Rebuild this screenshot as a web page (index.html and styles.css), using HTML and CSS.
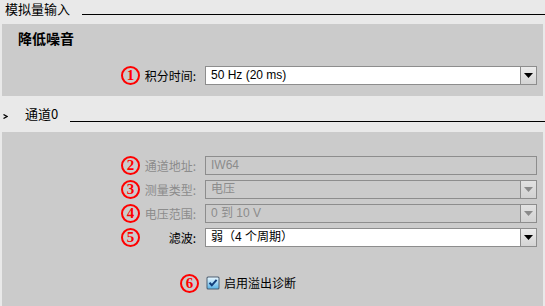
FILE: index.html
```html
<!DOCTYPE html>
<html lang="zh">
<head>
<meta charset="utf-8">
<link rel="stylesheet" href="styles.css">
</head>
<body>
<div class="page">
  <div class="sec-head top">
    <span class="title">模拟量输入</span>
    <span class="rule"></span>
  </div>
  <div class="panel p1">
    <div class="subtitle">降低噪音</div>
    <div class="row">
      <span class="num">1</span>
      <span class="label">积分时间:</span>
      <div class="select">
        <span class="val">50 Hz (20 ms)</span>
        <span class="btn"><svg width="9" height="5" viewBox="0 0 9 5"><path d="M0 0H9L4.5 5Z" fill="#000"/></svg></span>
      </div>
    </div>
  </div>
  <div class="sec-head ch">
    <svg class="chev" width="5" height="5" viewBox="0 0 5 5"><path d="M0.5 0.5L4 2.5L0.5 4.5" fill="none" stroke="#000" stroke-width="1.3"/></svg>
    <span class="title">通道0</span>
    <span class="rule"></span>
  </div>
  <div class="panel p2">
    <div class="rows">
      <div class="row dis">
        <span class="num">2</span>
        <span class="label">通道地址:</span>
        <div class="select plain"><span class="val">IW64</span></div>
      </div>
      <div class="row dis">
        <span class="num">3</span>
        <span class="label">测量类型:</span>
        <div class="select"><span class="val">电压</span><span class="btn"><svg width="9" height="5" viewBox="0 0 9 5"><path d="M0 0H9L4.5 5Z" fill="#8a8a8a"/></svg></span></div>
      </div>
      <div class="row dis">
        <span class="num">4</span>
        <span class="label">电压范围:</span>
        <div class="select"><span class="val">0 到 10 V</span><span class="btn"><svg width="9" height="5" viewBox="0 0 9 5"><path d="M0 0H9L4.5 5Z" fill="#8a8a8a"/></svg></span></div>
      </div>
      <div class="row">
        <span class="num">5</span>
        <span class="label">滤波:</span>
        <div class="select"><span class="val">弱（4 个周期）</span><span class="btn"><svg width="9" height="5" viewBox="0 0 9 5"><path d="M0 0H9L4.5 5Z" fill="#000"/></svg></span></div>
      </div>
    </div>
    <div class="check-row">
      <span class="num">6</span>
      <svg class="cb" width="14" height="14" viewBox="0 0 14 14">
        <defs>
          <linearGradient id="g" x1="0" y1="0" x2="0" y2="1">
            <stop offset="0" stop-color="#e6f6ff"/>
            <stop offset="1" stop-color="#5bb4e6"/>
          </linearGradient>
        </defs>
        <rect x="0.5" y="0.5" width="13" height="13" rx="1.5" fill="#4d5f72"/>
        <rect x="1.5" y="1.5" width="11" height="11" rx="1" fill="url(#g)"/>
        <path d="M3.5 6.8L5.8 9.3L10.6 3.8" fill="none" stroke="#123d7a" stroke-width="2"/>
      </svg>
      <span class="cb-label">启用溢出诊断</span>
    </div>
  </div>
</div>
</body>
</html>
```

FILE: styles.css
```css
html, body {
  margin: 0;
  padding: 0;
  background: #e9e9e9;
}
.page {
  width: 545px;
  height: 306px;
  overflow: hidden;
  font-family: "Noto Sans CJK SC", "Liberation Sans", sans-serif;
  font-size: 12px;
  color: #000;
}
.sec-head {
  display: flex;
  align-items: flex-start;
  background: #e9e9e9;
}
.sec-head.top {
  height: 24px;
  padding-left: 5px;
}
.sec-head.top .title {
  font-size: 13px;
  line-height: 17px;
}
.sec-head.top .rule {
  flex: 1;
  margin-left: 12px;
  margin-top: 14px;
  border-top: 1px solid #000;
}
.sec-head.ch {
  height: 36px;
  padding-left: 3px;
}
.chev {
  margin-top: 18px;
}
.sec-head.ch .title {
  font-size: 13px;
  line-height: 17px;
  margin-left: 17px;
  margin-top: 9px;
}
.sec-head.ch .rule {
  flex: 1;
  margin-left: 12px;
  margin-top: 25px;
  border-top: 1px solid #000;
}
.panel {
  margin: 0 2px;
  background: #cbcbcb;
  box-sizing: border-box;
}
.p1 {
  height: 72px;
  padding-top: 5px;
}
.subtitle {
  padding-left: 16px;
  font-size: 14px;
  font-weight: bold;
  line-height: 18px;
}
.p1 .row {
  margin-top: 19px;
}
.p2 {
  height: 174px;
  padding-top: 24px;
}
.rows {
  display: flex;
  flex-direction: column;
  gap: 5px;
}
.row {
  display: flex;
  align-items: center;
  height: 19px;
  padding-left: 119px;
}
.num {
  width: 19px;
  height: 19px;
  box-sizing: border-box;
  border: 2px solid #f00;
  border-radius: 50%;
  color: #f00;
  font-family: "Liberation Serif", serif;
  font-weight: bold;
  font-size: 15px;
  line-height: 15px;
  text-align: center;
  flex: none;
}
.label {
  width: 56px;
  text-align: right;
  line-height: 19px;
  flex: none;
}
.select {
  margin-left: 9px;
  width: 332px;
  height: 19px;
  box-sizing: border-box;
  border: 1px solid #8d8d8d;
  background: #fff;
  display: flex;
  align-items: stretch;
}
.val {
  flex: 1;
  padding-left: 5px;
  line-height: 17px;
  font-family: "Liberation Sans", "Noto Sans CJK SC", sans-serif;
  font-size: 12px;
}
.btn {
  width: 15px;
  border-left: 1px solid #8d8d8d;
  background: linear-gradient(#ececec, #d4d4d4);
  display: flex;
  align-items: center;
  justify-content: center;
}
.dis .label,
.dis .val {
  color: #8c8c8c;
}
.dis .select {
  background: #cbcbcb;
}
.dis .btn {
  background: linear-gradient(#e2e2e2, #d2d2d2);
}
.check-row {
  display: flex;
  align-items: center;
  margin-top: 26px;
  padding-left: 178px;
  height: 20px;
}
.cb {
  margin-left: 7px;
  flex: none;
}
.cb-label {
  margin-left: 4px;
  line-height: 20px;
}
```
